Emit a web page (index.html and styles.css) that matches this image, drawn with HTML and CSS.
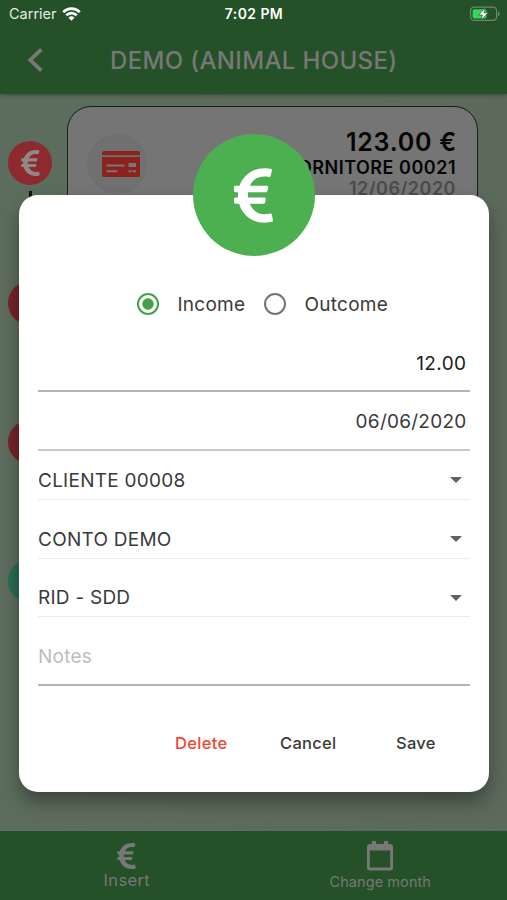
FILE: index.html
```html
<!DOCTYPE html>
<html lang="en">
<head>
    <meta charset="UTF-8">
    <meta name="viewport" content="width=device-width, initial-scale=1.0">
    <title>Demo (Animal House)</title>
    <link rel="stylesheet" href="styles.css">
</head>
<body>
    <!-- Shared euro icon -->
    <svg class="defs" width="0" height="0">
        <symbol id="euro" viewBox="0 32 320 448">
            <path d="M310.706 413.765c-1.314-6.63-7.835-10.872-14.424-9.369-10.692 2.439-27.422 5.413-45.426 5.413-56.763 0-101.929-34.79-121.461-85.449h113.689a12 12 0 0 0 11.708-9.369l6.373-28.36c1.686-7.502-4.019-14.63-11.708-14.63H115.22c-1.21-14.328-1.414-28.287.137-42.245H261.95a12 12 0 0 0 11.723-9.434l6.512-29.755c1.638-7.484-4.061-14.566-11.723-14.566H130.184c20.633-44.991 62.69-75.03 117.619-75.03 14.486 0 28.564 2.25 37.851 4.145 6.216 1.268 12.347-2.498 14.002-8.623l11.991-44.368c1.822-6.741-2.465-13.616-9.326-14.917C290.217 34.912 270.71 32 249.635 32 152.451 32 74.03 92.252 45.075 176H12c-6.627 0-12 5.373-12 12v29.755c0 6.627 5.373 12 12 12h21.569c-1.009 13.607-1.181 29.287-.181 42.245H12c-6.627 0-12 5.373-12 12v28.36c0 6.627 5.373 12 12 12h30.114C67.139 414.692 145.264 480 249.635 480c26.301 0 48.562-4.544 61.101-7.788 6.167-1.595 10.027-7.708 8.788-13.957l-8.818-44.49z"/>
        </symbol>
    </svg>

    <div class="app">
        <header class="header">
            <div class="status">
                <div class="carrier">
                    <span>Carrier</span>
                    <svg width="19" height="14" viewBox="0 0 19 14">
                        <g fill="none" stroke="#fff" stroke-width="2.7">
                            <path d="M1.2 5.1a11.8 11.8 0 0 1 16.6 0"/>
                            <path d="M4.3 8.3a7.4 7.4 0 0 1 10.4 0"/>
                        </g>
                        <path d="M9.5 13.8 6.5 10.7a4.3 4.3 0 0 1 6 0z" fill="#fff"/>
                    </svg>
                </div>
                <span class="clock">7:02 PM</span>
                <svg class="battery" width="32" height="16" viewBox="0 0 32 16">
                    <rect x="1.6" y="1.2" width="26" height="13.2" rx="3.6" fill="none" stroke="#6c8b6e" stroke-width="1.2"/>
                    <path d="M29 5.5v4.6c1.1-.4 1.7-1.3 1.7-2.3S30.1 5.9 29 5.5z" fill="#6c8b6e"/>
                    <rect x="3.6" y="3.2" width="14" height="9.2" rx="1.8" fill="#35d65c"/>
                    <path d="M16.6 1.8 9.4 9h4l-1.5 5.2 7.4-7.4H15z" fill="#fff" stroke="#245127" stroke-width=".7"/>
                </svg>
            </div>
            <div class="titlebar">
                <svg class="back" width="18" height="26" viewBox="0 0 18 26">
                    <path d="M15.4 2.3 4.2 13l11.2 10.7" fill="none" stroke="#777877" stroke-width="3.7"/>
                </svg>
                <h1 class="title">DEMO (ANIMAL HOUSE)</h1>
            </div>
        </header>

        <main class="content">
            <!-- Timeline of movements -->
            <div class="timeline">
                <div class="dot first"><svg width="19" height="26"><use href="#euro"/></svg></div>
                <div class="line"></div>
                <div class="dot dim"></div>
                <div class="dot dim"></div>
                <div class="dot income"></div>
            </div>
            <div class="card">
                <div class="card-icon">
                    <svg width="38" height="27" viewBox="0 0 38 27">
                        <path fill="#8b221c" d="M1.5 0h35L38 1.5V4.3H0V1.5zM0 6h38v18.5q0 1.5-1.5 1.5h-35Q0 26 0 24.5z"/>
                        <path fill="#777" d="M4.5 13.5h18v2h-18zM4.5 19.3h10.8v2H4.5zM26.5 12h7.5v4h-7.5zM26.5 19.3h3v2h-3zM30.5 19.3h3.5v2h-3.5z"/>
                    </svg>
                </div>
                <div class="card-text">
                    <div class="amount">123.00 €</div>
                    <div class="supplier">FORNITORE 00021</div>
                    <div class="date">12/06/2020</div>
                </div>
            </div>
        </main>

        <nav class="tabs">
            <div class="tab insert">
                <svg width="19" height="26"><use href="#euro"/></svg>
                <span>Insert</span>
            </div>
            <div class="tab month">
                <svg width="26" height="30" viewBox="0 0 26 30">
                    <path fill-rule="evenodd" d="M5 0h4v3h8V0h4v3h2q3 0 3 3v20.5q0 3-3 3H3q-3 0-3-3V6q0-3 3-3h2zM2.8 9.5v17h20.4v-17z"/>
                </svg>
                <span>Change month</span>
            </div>
        </nav>
    </div>

    <!-- Edit dialog -->
    <div class="dialog">
        <div class="badge"><svg width="39" height="55"><use href="#euro"/></svg></div>
        <div class="radios">
            <span class="radio checked"></span>
            <span class="income-label">Income</span>
            <span class="radio"></span>
            <span class="outcome-label">Outcome</span>
        </div>
        <div class="field value"><span>12.00</span></div>
        <div class="field day"><span>06/06/2020</span></div>
        <div class="select"><span>CLIENTE 00008</span><i class="arrow"></i></div>
        <div class="select"><span>CONTO DEMO</span><i class="arrow"></i></div>
        <div class="select"><span>RID - SDD</span><i class="arrow"></i></div>
        <div class="field notes"><span>Notes</span></div>
        <div class="actions">
            <span class="delete">Delete</span>
            <span class="cancel">Cancel</span>
            <span class="save">Save</span>
        </div>
    </div>
</body>
</html>
```
FILE: styles.css
```css
* {
    box-sizing: border-box;
}
body {
    margin: 0;
    font-family: Inter, "Liberation Sans", sans-serif;
    color: #3a3a3a;
    overflow: hidden;
}
.defs {
    position: absolute;
}
svg {
    display: block;
    flex: none;
}
span, .amount, .supplier, .date {
    white-space: nowrap;
}
.app {
    width: 507px;
    height: 900px;
    display: flex;
    flex-direction: column;
    background: linear-gradient(90deg, #5d6d5d, #5b6a5b);
}

/* Header */
.header {
    height: 94px;
    background: #245127;
    box-shadow: 0 1px 4px rgba(0, 0, 0, 0.35);
}
.status {
    height: 28px;
    padding: 0 6px 0 9px;
    display: grid;
    grid-template-columns: 1fr auto 1fr;
    align-items: center;
    color: #fff;
    font-size: 14.5px;
}
.carrier {
    display: flex;
    align-items: center;
    gap: 5px;
    color: #e6ece6;
}
.carrier span, .clock {
    padding-bottom: 2px;
}
.clock {
    font-size: 14px;
    font-weight: 600;
    letter-spacing: 0.4px;
    margin-left: -2px;
}
.battery {
    justify-self: end;
    margin-bottom: 1px;
}
.titlebar {
    height: 64px;
    display: flex;
    align-items: center;
    padding-left: 26px;
}
.title {
    margin: 0 0 0 66px;
    padding-top: 2px;
    font-size: 24px;
    font-weight: 500;
    line-height: 28px;
    letter-spacing: 0.35px;
    color: #777877;
    white-space: nowrap;
}

/* Content behind the dialog */
.content {
    height: 737px;
    display: flex;
    padding: 12px 29px 0 8px;
}
.timeline {
    width: 44px;
    padding-top: 35px;
    margin-right: 15px;
}
.dot {
    width: 44px;
    height: 44px;
    border-radius: 50%;
    display: flex;
    align-items: center;
    justify-content: center;
    background: #8c2a2e;
    fill: #8f8887;
    margin-bottom: 95px;
}
.dot.first {
    margin-bottom: 6px;
}
.dot.dim {
    background: #762428;
}
.dot.income {
    background: #2b6c52;
}
.line {
    width: 3px;
    height: 60px;
    background: #111;
    margin: 0 auto 30px;
}
.card {
    flex: 1;
    height: 116px;
    border: 1.5px solid #181d18;
    border-radius: 24px 24px 0 0;
    background: #757575;
    display: flex;
    justify-content: space-between;
    padding: 20px 20px 0 19px;
}
.card-icon {
    width: 60px;
    height: 60px;
    margin-top: 7px;
    border-radius: 50%;
    background: #707070;
    display: flex;
    align-items: center;
    justify-content: center;
    padding-left: 7px;
}
.card-text {
    text-align: right;
    color: #050505;
}
.amount {
    font-size: 25px;
    font-weight: 600;
    line-height: 30px;
    letter-spacing: 0.75px;
}
.supplier {
    font-size: 18px;
    font-weight: 600;
    line-height: 21px;
    letter-spacing: 0.5px;
    margin-right: 1px;
}
.date {
    font-size: 18px;
    font-weight: 600;
    line-height: 22px;
    letter-spacing: 0.5px;
    margin-right: 1px;
    color: #4b4b4b;
}

/* Bottom bar */
.tabs {
    height: 69px;
    display: flex;
    background: #245127;
    color: #777877;
    fill: #777877;
}
.tab {
    flex: 1;
    display: flex;
    flex-direction: column;
    align-items: center;
}
.insert {
    padding-top: 12px;
    font-size: 16.5px;
    line-height: 20px;
    letter-spacing: 0.35px;
}
.insert span {
    margin-top: 1px;
}
.month {
    padding-top: 10px;
    font-size: 14.5px;
    line-height: 20px;
    letter-spacing: 0.08px;
}
.month span {
    margin-top: 1px;
}

/* Dialog */
.dialog {
    position: absolute;
    left: 19px;
    top: 195px;
    width: 470px;
    height: 596.5px;
    padding: 88px 19px 0 19px;
    border-radius: 19px;
    background: #fff;
    box-shadow: 0 10px 18px rgba(0, 0, 0, 0.35);
    font-size: 19px;
    letter-spacing: 0.25px;
}
.badge {
    position: absolute;
    left: 174px;
    top: -61px;
    width: 122px;
    height: 122px;
    border-radius: 50%;
    background: #4caf50;
    fill: #fff;
    display: flex;
    align-items: center;
    justify-content: center;
}
.badge svg {
    margin-right: 1px;
}
.radios {
    height: 42px;
    display: flex;
    align-items: center;
    padding-left: 99px;
}
.radio {
    width: 22px;
    height: 22px;
    border: 2.5px solid #757575;
    border-radius: 50%;
    margin-right: 18.5px;
    flex: none;
}
.radio.checked {
    border-color: #43a047;
    background: radial-gradient(circle, #43a047 5.3px, #fff 6px);
}
.income-label {
    width: 86.5px;
}
.field {
    display: flex;
    justify-content: flex-end;
    border-bottom: 2px solid #b4b4b4;
    line-height: 24px;
    padding: 0 3.5px 0 0;
}
.value {
    height: 67px;
    padding-top: 27px;
    color: #202020;
    letter-spacing: 0.4px;
}
.day {
    height: 59px;
    padding-top: 18px;
    border-color: #c8c8c8;
}
.select {
    height: 58.7px;
    display: flex;
    justify-content: space-between;
    align-items: center;
    line-height: 24px;
    padding: 0 8px 0 0;
    background: linear-gradient(#ececec, #ececec) 0 48px / 100% 1px no-repeat;
}
.select span {
    padding-top: 1px;
}
.arrow {
    border: 6px solid transparent;
    border-top-color: #616161;
    border-bottom: 0;
}
.notes {
    height: 59px;
    justify-content: flex-start;
    padding-top: 18px;
    color: #bdbdbd;
}
.actions {
    display: flex;
    padding: 45px 0 0 137px;
    font-size: 16.5px;
    font-weight: 500;
    line-height: 24px;
    letter-spacing: 0.3px;
}
.delete {
    width: 105px;
    color: #f44336;
}
.cancel {
    width: 116px;
}
```
